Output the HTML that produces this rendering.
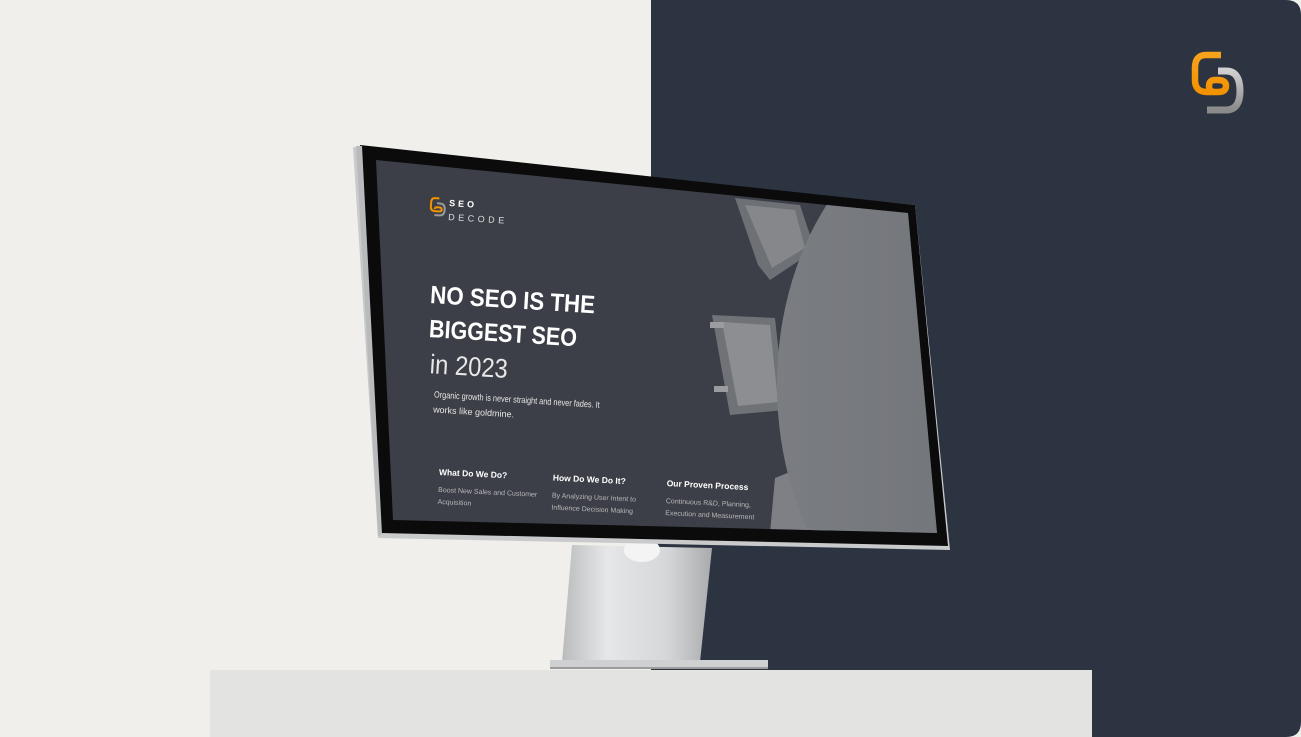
<!DOCTYPE html>
<html><head><meta charset="utf-8"><style>
html,body{margin:0;padding:0;width:1301px;height:737px;overflow:hidden;background:#fff}
svg{display:block}
text{font-family:"Liberation Sans",sans-serif}
</style></head><body>
<svg width="1301" height="737" viewBox="0 0 1301 737">
<defs>
<clipPath id="scr"><polygon points="376,160 908,213 937,533 393,520"/></clipPath>
<linearGradient id="neck" x1="0" x2="1">
<stop offset="0" stop-color="#b9bbbd"/><stop offset="0.3" stop-color="#e6e7e8"/><stop offset="0.7" stop-color="#d6d7d8"/><stop offset="1" stop-color="#a9abad"/></linearGradient>
<linearGradient id="lg" x1="0" y1="0" x2="0" y2="1"><stop offset="0" stop-color="#f6a21b"/><stop offset="1" stop-color="#f39200"/></linearGradient>
<linearGradient id="gg" x1="0" y1="0" x2="0" y2="1"><stop offset="0" stop-color="#d0d0d0"/><stop offset="1" stop-color="#8a8a8a"/></linearGradient>
<linearGradient id="tb" x1="0" x2="1"><stop offset="0" stop-color="#7a7d82"/><stop offset="1" stop-color="#6a6d72"/></linearGradient>
</defs>
<rect x="0" y="0" width="1301" height="737" fill="#f0efeb"/>
<path d="M651 0 H1286 Q1301 0 1301 15 V722 Q1301 737 1286 737 H651 Z" fill="#2c3341"/>
<!-- top right logo -->
<g>
<path d="M1218 71 H1226 Q1240 71 1240 91 Q1240 110 1226 110 H1207" fill="none" stroke="url(#gg)" stroke-width="7"/>
<path d="M1221 55 H1206 Q1195 55 1195 68 V80 Q1195 92 1207 92 H1218 Q1226 92 1226 86 Q1226 80 1218 80 H1215 Q1209 80 1209 86 Q1209 92 1215 92" fill="none" stroke="url(#lg)" stroke-width="6.5"/>
</g>
<!-- pedestal -->
<rect x="210" y="670" width="882" height="67" fill="#e3e3e1"/>
<!-- stand -->
<polygon points="572,545 712,548 700,662 562,662" fill="url(#neck)"/>
<ellipse cx="642" cy="550" rx="18" ry="12" fill="#f4f4f4"/>
<rect x="550" y="660" width="218" height="9" fill="#cfd0d1"/>
<rect x="550" y="667" width="218" height="2" fill="#9a9b9c"/>
<!-- monitor body -->
<polygon points="353,147 915,205 950,550 378,538" fill="#c9cacc"/>
<polygon points="360,145 915,205 948,546 380,533" fill="#0b0b0c"/>
<polygon points="356,146 362,146 382,534 378,536" fill="#b8babc"/>
<!-- screen -->
<polygon points="376,160 908,213 937,533 393,520" fill="#3c3f47"/>
<g clip-path="url(#scr)">
<polygon points="735,198 800,205 815,250 770,280 758,265" fill="#6d7075"/>
<polygon points="745,205 795,210 805,248 772,268" fill="#85878b"/>
<polygon points="712,315 775,318 785,410 730,415" fill="#6f7276"/>
<polygon points="722,322 770,325 778,402 738,406" fill="#8c8e92"/>
<rect x="710" y="322" width="14" height="6" fill="#9a9ca0"/>
<rect x="714" y="386" width="14" height="6" fill="#9a9ca0"/>
<polygon points="775,478 815,462 840,530 770,533" fill="#7e8085"/>
<ellipse cx="975" cy="385" rx="198" ry="272" fill="url(#tb)"/>
</g>
<!-- screen text -->
<g transform="rotate(3.6 430 300)">
<path d="M433 198 H428 Q425 198 425 203 V207 Q425 211 429 211 H433 Q436 211 436 209 Q436 207 433 207 H431 Q429 207 429 209" fill="none" stroke="#f39200" stroke-width="2"/>
<path d="M431 203 H434 Q439 203 439 209 Q439 215 434 215 H429" fill="none" stroke="#9a9a9a" stroke-width="2"/>
<text x="443" y="205" fill="#fff" font-size="9" font-weight="bold" letter-spacing="3">SEO</text>
<text x="443" y="219" fill="#ddd" font-size="9" letter-spacing="3.5">DECODE</text>
<text x="430" y="303" fill="#fff" font-size="25" font-weight="bold" textLength="165" lengthAdjust="spacingAndGlyphs">NO SEO IS THE</text>
<text x="431" y="337" fill="#fff" font-size="25" font-weight="bold" textLength="148" lengthAdjust="spacingAndGlyphs">BIGGEST SEO</text>
<text x="434" y="373" fill="#e8e8e8" font-size="27" textLength="78" lengthAdjust="spacingAndGlyphs">in 2023</text>
<text x="440" y="397" fill="#e6e6e6" font-size="9" textLength="166" lengthAdjust="spacingAndGlyphs">Organic growth is never straight and never fades. It</text>
<text x="440" y="412" fill="#e6e6e6" font-size="9">works like goldmine.</text>
</g>
<g transform="rotate(2.8 440 472)">
<text x="439" y="475" fill="#fff" font-size="8.5" font-weight="bold">What Do We Do?</text>
<text x="439" y="492" fill="#b8b8b8" font-size="7">Boost New Sales and Customer</text>
<text x="439" y="504" fill="#b8b8b8" font-size="7">Acquisition</text>
<text x="553" y="475" fill="#fff" font-size="8.5" font-weight="bold">How Do We Do It?</text>
<text x="553" y="492" fill="#b8b8b8" font-size="7">By Analyzing User Intent to</text>
<text x="553" y="504" fill="#b8b8b8" font-size="7">Influence Decision Making</text>
<text x="667" y="475" fill="#fff" font-size="8.5" font-weight="bold">Our Proven Process</text>
<text x="667" y="492" fill="#b8b8b8" font-size="7">Continuous R&amp;D, Planning,</text>
<text x="667" y="504" fill="#b8b8b8" font-size="7">Execution and Measurement</text>
</g>
</svg>
</body></html>
